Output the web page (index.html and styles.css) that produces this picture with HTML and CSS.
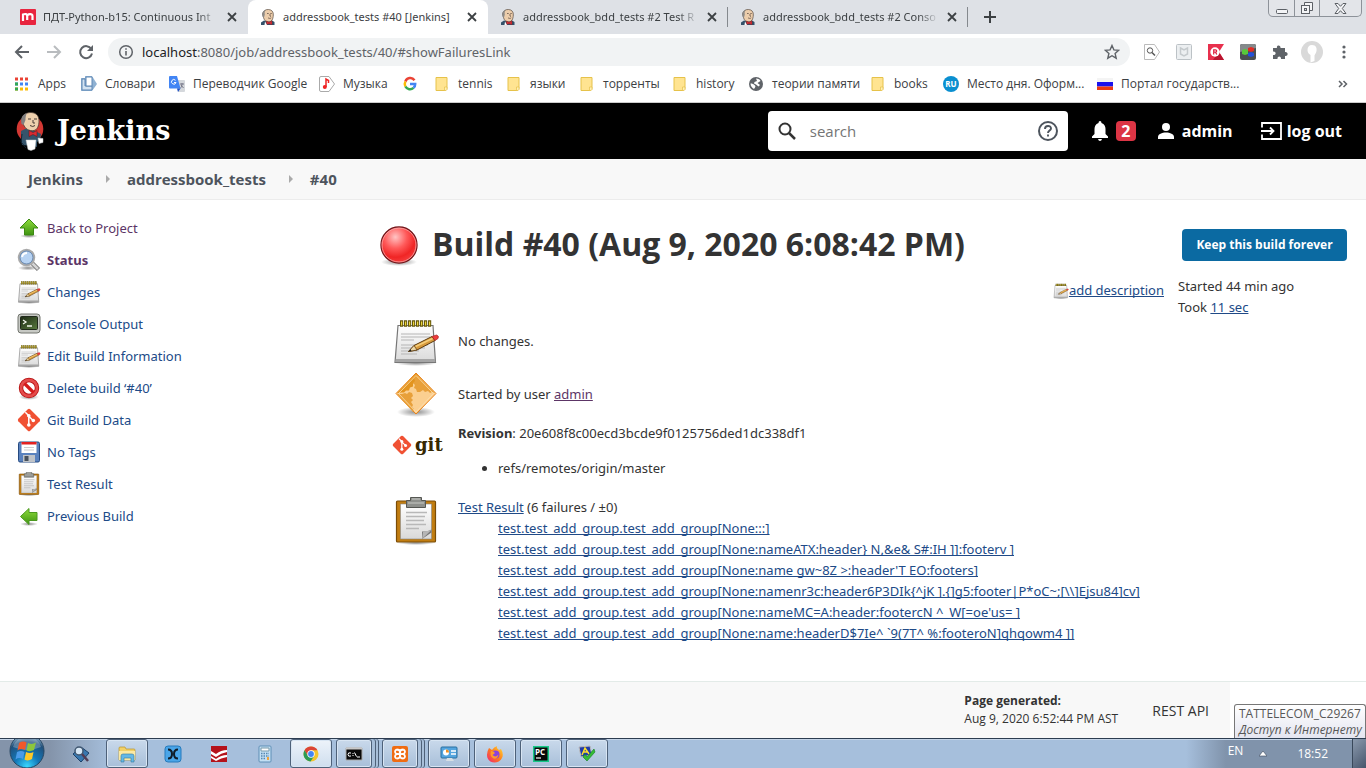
FILE: index.html
```html
<!DOCTYPE html>
<html lang="en">
<head>
<meta charset="utf-8">
<title>addressbook_tests #40 [Jenkins]</title>
<link rel="stylesheet" href="styles.css">
</head>
<body>
<svg class="defs" aria-hidden="true">
  <defs>
    <linearGradient id="gGreen" x1="0" y1="0" x2="0" y2="1"><stop offset="0" stop-color="#8fdc3c"/><stop offset="1" stop-color="#3f9412"/></linearGradient>
    <linearGradient id="gPaper" x1="0" y1="0" x2="0" y2="1"><stop offset="0" stop-color="#ffffff"/><stop offset="1" stop-color="#d9d9d9"/></linearGradient>
    <radialGradient id="gBall" cx=".4" cy=".28" r=".7"><stop offset="0" stop-color="#ffc4c4"/><stop offset=".45" stop-color="#ff5a5a"/><stop offset=".8" stop-color="#f02525"/><stop offset="1" stop-color="#f43a3a"/></radialGradient>
    <radialGradient id="gShadow"><stop offset="0" stop-color="#000" stop-opacity=".45"/><stop offset="1" stop-color="#000" stop-opacity="0"/></radialGradient>
    <linearGradient id="gOrange" x1="0" y1="0" x2="1" y2="1"><stop offset="0" stop-color="#e08a10"/><stop offset="1" stop-color="#f0a53a"/></linearGradient>
    <linearGradient id="gScreen" x1="0" y1="0" x2="1" y2="1"><stop offset="0" stop-color="#1d2a14"/><stop offset="1" stop-color="#587a3e"/></linearGradient>
    <radialGradient id="gOrb" cx=".5" cy=".95" r=".9"><stop offset="0" stop-color="#38d8ff"/><stop offset=".4" stop-color="#1478b8"/><stop offset=".8" stop-color="#20507c"/><stop offset="1" stop-color="#8fb0c8"/></radialGradient>
    <linearGradient id="gFox" x1="1" y1="0" x2="0" y2="1"><stop offset="0" stop-color="#ffe03a"/><stop offset=".5" stop-color="#ff7a1a"/><stop offset="1" stop-color="#f0207a"/></linearGradient>
  </defs>
  <symbol id="butler" viewBox="0 0 16 16">
    <path d="M1 16v-2.500l3-2 4 1 4-1 2.500 1.500V16z" fill="#34526a"/>
    <path d="M2.500 5C3 2 5.500.300 8.500.500c3.500.200 5 2.500 4.800 5.500-.100 4-1.500 6.700-4.300 6.900C6 13 4 11 3.500 8.500z" fill="#eccdab" stroke="#55473d" stroke-width=".7"/>
    <path d="M2.500 7.500C1.800 4 3 1.500 5.500.900c-.800 1.500-1 3-.7 4.600l-.800 3z" fill="#8d8b89"/>
    <path d="M7 4.500h1.700M10.300 4.500h1.500M8 8.800c1.200.8 2.500.8 3.200 0M10 5v2l1 .5" fill="none" stroke="#54443c" stroke-width=".7"/>
    <path d="M6.500 12l2.500 1.200 3-1.500v4l-3-1-2.500 1z" fill="#d22f35" stroke="#711" stroke-width=".3"/>
    <path d="M5 12.500l2 3.500h-2.500z" fill="#fff"/>
  </symbol>
  <symbol id="close" viewBox="0 0 10 10"><path d="M1 1l8 8M9 1l-8 8" stroke="#3c4043" stroke-width="1.800"/></symbol>
  <symbol id="folder" viewBox="0 0 16 16"><path d="M2 1.500h11v11c0 1-1 2-2 2H2z" fill="#ffe491" stroke="#e6c24a"/><path d="M10.500 14.500v-3.500h2.500v2.500q-.5 1-2 1z" fill="#fff0b5" stroke="#e6c24a" stroke-width=".7"/></symbol>
  <symbol id="notepad" viewBox="0 0 48 48">
    <ellipse cx="24" cy="45" rx="21" ry="3" fill="url(#gShadow)"/>
    <path d="M6 7.500h35l2.500 37H3z" fill="url(#gPaper)" stroke="#777" stroke-width="1.200"/>
    <path d="M4 41h39l.5 3H3.500z" fill="#a5a5a5"/>
    <path d="M9 16h29M9 19h29M9 22h13M9 27h27M9 30h24M9 33h18M9 36h16" stroke="#b5b5b5"/>
    <path d="M8 5.500h32" stroke="#63560b" stroke-width="6.500" stroke-dasharray="3.200 .8"/>
    <path d="M9 5.500h30" stroke="#ecd43b" stroke-width="4" stroke-dasharray="1.200 2.800"/>
    <path d="M16.500 33.500L22 27.500l18-9 3 4L25 32z" fill="#d79a3c" stroke="#5b3b10"/>
    <path d="M23.500 28.500l17-8" stroke="#f5ce7a" stroke-width="1.500"/>
    <path d="M16.500 33.500l5.500-6 3 4.500z" fill="#ecd6a4" stroke="#5b3b10" stroke-width=".7"/><path d="M16.500 33.500l2-2.300 1 1.700z" fill="#222"/>
    <path d="M40 18.500l4.500-1.500q3 1 1.500 3.500l-3 2z" fill="#ee3d3d" stroke="#a22" stroke-width=".7"/>
  </symbol>
  <symbol id="gitmark" viewBox="0 0 24 24">
    <path d="M12 .8q.7 0 1.200.5l9.500 9.500q1 1.200 0 2.400l-9.500 9.500q-1.200 1-2.400 0L1.300 13.200q-1-1.200 0-2.400L10.800 1.300Q11.300.8 12 .8z" fill="#f05133"/>
    <path d="M8.300 4.300l3.500 3.500v9.500M11.800 8.300l4.500 4.500" fill="none" stroke="#fff" stroke-width="1.500"/>
    <circle cx="11.800" cy="7.700" r="1.800" fill="#fff"/><circle cx="11.800" cy="17" r="1.800" fill="#fff"/><circle cx="16.300" cy="12.500" r="1.800" fill="#fff"/>
  </symbol>
  <symbol id="clipboard" viewBox="0 0 48 48">
    <ellipse cx="24" cy="46" rx="19" ry="2" fill="url(#gShadow)"/>
    <rect x="4.500" y="4" width="39" height="41" rx="1" fill="#c17d11" stroke="#7b4c06" stroke-width="1.200"/>
    <path d="M8.500 7h31v35h-31z" fill="url(#gPaper)" stroke="#888" stroke-width=".6"/>
    <path d="M14 15.500h21M14 19.500h19M14 23.500h18M14 27.500h20M14 31.500h13" stroke="#b8b8b8" stroke-width="1.500"/>
    <path d="M30 42v-7.500h5l4.500-2v3z" fill="#777"/><path d="M30 42l1-7 8.500-2z" fill="#b5b5b5"/>
    <path d="M14.500 3.500h4V.5h11v3h4v7h-19z" fill="#8e908c" stroke="#555753"/><path d="M20 2h8M16 6h16" stroke="#c8cac6"/>
  </symbol>
</svg>

<header class="browser">
  <div class="tabstrip">
    <div class="tab"><svg class="i16" viewBox="0 0 16 16"><rect width="16" height="16" rx="1" fill="#e8253f"/><path d="M3 12V5.500c2.500-1 4-.5 4.200 1.500V11M7.200 7c.3-2 5.300-3 5.300 0v4" fill="none" stroke="#fff" stroke-width="2.200"/></svg><span class="tab-title fade">ПДТ-Python-b15: Continuous Int</span><button class="close" aria-label="Close tab"><svg><use href="#close"/></svg></button></div>
    <div class="tab active"><svg class="i16"><use href="#butler"/></svg><span class="tab-title">addressbook_tests #40 [Jenkins]</span><button class="close" aria-label="Close tab"><svg><use href="#close"/></svg></button></div>
    <div class="tab split"><svg class="i16"><use href="#butler"/></svg><span class="tab-title fade">addressbook_bdd_tests #2 Test R</span><button class="close" aria-label="Close tab"><svg><use href="#close"/></svg></button></div>
    <div class="tab split"><svg class="i16"><use href="#butler"/></svg><span class="tab-title fade">addressbook_bdd_tests #2 Conso</span><button class="close" aria-label="Close tab"><svg><use href="#close"/></svg></button></div>
    <button class="newtab" aria-label="New tab"><svg class="i12" viewBox="0 0 12 12"><path d="M6 0v12M0 6h12" stroke="#3c4043" stroke-width="2"/></svg></button>
    <div class="window-controls">
      <button aria-label="Minimize"><svg width="14" height="12" viewBox="0 0 14 12"><rect x="1.500" y="7.500" width="11" height="4" rx="1" fill="#f3f4f6" stroke="#5c6066"/></svg></button>
      <button aria-label="Restore"><svg width="14" height="13" viewBox="0 0 14 13"><path d="M4.500 3V.5h8v8H10" fill="#f3f4f6" stroke="#5c6066"/><rect x="1.500" y="3.500" width="8" height="8" fill="#f3f4f6" stroke="#5c6066"/><rect x="4.500" y="6.500" width="2" height="2" fill="#dee1e6" stroke="#5c6066"/></svg></button>
      <button aria-label="Close"><svg width="13" height="11" viewBox="0 0 13 11"><path d="M1 .5h3l2.500 2.800L9 .5h3L8.300 5.500l3.700 5H9L6.500 7.700 4 10.500H1l3.700-5z" fill="#f3f4f6" stroke="#5c6066"/></svg></button>
    </div>
  </div>
  <div class="toolbar">
    <button aria-label="Back"><svg class="i16" viewBox="0 0 16 16"><path d="M15 8H2.500M8 2L2 8l6 6" fill="none" stroke="#5f6368" stroke-width="2"/></svg></button>
    <button aria-label="Forward"><svg class="i16" viewBox="0 0 16 16"><path d="M1 8h12.500M8 2l6 6-6 6" fill="none" stroke="#b9bcbf" stroke-width="2"/></svg></button>
    <button aria-label="Reload"><svg class="i16" viewBox="0 0 16 16"><path d="M13.300 5A6 6 0 1 0 14 9.500" fill="none" stroke="#5f6368" stroke-width="2"/><path d="M15 1v6H9z" fill="#5f6368"/></svg></button>
    <div class="omnibox">
      <svg class="i16" viewBox="0 0 16 16"><circle cx="8" cy="8" r="6.300" fill="none" stroke="#5f6368" stroke-width="1.500"/><path d="M8 7v4.500M8 4.300v1.500" stroke="#5f6368" stroke-width="1.600"/></svg>
      <span class="url"><b>localhost</b>:8080/job/addressbook_tests/40/#showFailuresLink</span>
      <svg class="i16" viewBox="0 0 16 16"><path d="M8 1.500l1.900 4.400 4.800.400-3.600 3.200 1.100 4.700L8 11.700l-4.200 2.500 1.100-4.700L1.300 6.300l4.800-.4z" fill="none" stroke="#5f6368" stroke-width="1.400"/></svg>
    </div>
    <div class="extensions">
      <svg viewBox="0 0 16 16"><path d="M.5.500h10l5 7.500-5 7.500H.5z" fill="#fff" stroke="#bbb"/><circle cx="6" cy="6.500" r="2.700" fill="none" stroke="#555"/><path d="M8 8.500l3 3" stroke="#555" stroke-width="1.500"/></svg>
      <svg viewBox="0 0 16 16"><rect x=".5" y=".5" width="15" height="15" rx="1" fill="#eceff1" stroke="#bcc2c6"/><path d="M4.500 4l3.500 2 3.500-2v6L8 12 4.500 10z" fill="none" stroke="#c5cacd" stroke-width="1.500"/></svg>
      <svg viewBox="0 0 16 16"><path d="M0 0h16l-5 8 5 8H0z" fill="#e8304d"/><path d="M11 8l5 8H5z" fill="#b9142f"/><circle cx="7" cy="8" r="4.700" fill="#fff"/><path d="M5.700 10.500V5.800h1.800c1.600 0 1.600 2.400 0 2.400H5.700M7.500 8.200l1.300 2.300" fill="none" stroke="#e02040" stroke-width="1.200"/></svg>
      <svg viewBox="0 0 16 16"><rect width="16" height="16" rx="2" fill="#4b4f51"/><path d="M0 2q0-2 2-2h12q2 0 2 2v2L0 8z" fill="#85898b"/><path d="M2 6l3-1 3 1v4l-3 1-3-1z" fill="#58c93a"/><path d="M8 4l3-1 3 1v3l-3 1-3-1z" fill="#e02c25"/><path d="M8 9l3-1 3 1v3l-3 1-3-1z" fill="#2450d8"/></svg>
      <svg viewBox="0 0 16 16"><path d="M1 4h4C4 .500 9 .500 8.500 4H13v4c3.500-.5 3.500 4.500 0 4v3H9c.500-3.500-4-3.500-3.500 0H1v-4c3.500.500 3.500-4 0-3.500z" fill="#5f6368"/></svg>
      <svg class="avatar" viewBox="0 0 22 22"><circle cx="11" cy="11" r="11" fill="#d9d9d9"/><path d="M11 4c4 0 5 3 4.500 6-.3 2-1.500 3-2 4.500V20l-4 1.500V14c-2-1-3-3-3-5 0-3 1.500-5 4.500-5z" fill="#fff"/></svg>
      <svg viewBox="0 0 16 16"><g fill="#5f6368"><circle cx="8" cy="3" r="1.600"/><circle cx="8" cy="8" r="1.600"/><circle cx="8" cy="13" r="1.600"/></g></svg>
    </div>
  </div>
  <nav class="bookmarks" aria-label="Bookmarks">
    <a href="#"><svg viewBox="0 0 16 16"><g stroke-width="3" stroke-dasharray="3 2"><path d="M1 3h13" stroke="#ea4335"/><path d="M1 8h13" stroke="#4285f4"/><path d="M1 13h13" stroke="#fbbc05"/></g><path d="M1 6.500h3v3H1zM1 11.500h3v3H1z" fill="#34a853"/></svg>Apps</a>
    <a href="#"><svg viewBox="0 0 16 16"><path d="M4 0h7l5 8-5 7H0V2h4z" fill="#8fb1d2"/><path d="M1 3h3v7h7v4H1z" fill="#d2e2f1" stroke="#5e87b4"/><path d="M5 1h6v9H5z" fill="#fff" stroke="#5e87b4"/></svg>Словари</a>
    <a href="#"><svg viewBox="0 0 16 16"><path d="M8 4h7q1 0 1 1v10q0 1-1 1H9z" fill="#d5d8dc"/><path d="M1 0h7l3.500 12.500H1q-1 0-1-1V1q0-1 1-1z" fill="#4285f4"/><path d="M8 12.500h3.500L9 16z" fill="#1c4fc4"/><path d="M6.500 4.300A2.300 2.300 0 1 0 7 6.500H5" fill="none" stroke="#fff"/><path d="M11 8h4M13 7v1c0 2-1 4-1.500 4M12 9l2.500 3" stroke="#778" fill="none"/></svg>Переводчик Google</a>
    <a href="#"><svg viewBox="0 0 16 16"><path d="M2 .5h8L15.500 8 10 15.500H2Q.5 15.500.5 14V2Q.5.500 2 .5z" fill="#fff" stroke="#aaa"/><path d="M7 11V3l2.500 1.500V7" fill="none" stroke="#e22" stroke-width="1.500"/><circle cx="5.800" cy="11" r="2" fill="#e22"/></svg>Музыка</a>
    <a href="#" aria-label="Google"><svg viewBox="0 0 16 16" fill="none" stroke-width="2.500"><path d="M12.500 4.200A5.200 5.200 0 0 0 3.400 5.500" stroke="#ea4335"/><path d="M3.400 5.500a5.200 5.200 0 0 0 0 5" stroke="#fbbc05"/><path d="M3.400 10.500a5.200 5.200 0 0 0 8.100 1.400" stroke="#34a853"/><path d="M11.500 11.900A5 5 0 0 0 13.200 8H8" stroke="#4285f4"/></svg></a>
    <a href="#"><svg><use href="#folder"/></svg>tennis</a>
    <a href="#"><svg><use href="#folder"/></svg>языки</a>
    <a href="#"><svg><use href="#folder"/></svg>торренты</a>
    <a href="#"><svg><use href="#folder"/></svg>history</a>
    <a href="#"><svg viewBox="0 0 16 16"><circle cx="8" cy="8" r="7" fill="#5f6368"/><path d="M2.500 7.500c2 0 3 .5 4.500 2 1 1 0 2-1 3.500C4 12 2.500 10 2.500 7.500zM8 2.500c2.500 0 4 1 4.500 2.500L9.500 7 12 9l-1.500 1.500L8 8.500 6 7.500 6.500 6 9 5z" fill="#fff"/></svg>теории памяти</a>
    <a href="#"><svg><use href="#folder"/></svg>books</a>
    <a href="#"><svg viewBox="0 0 16 16"><circle cx="8" cy="8" r="8" fill="#0a8fd0"/><text class="ru" x="8" y="11" text-anchor="middle">RU</text></svg>Место дня. Оформ...</a>
    <a href="#"><svg viewBox="0 0 16 16"><path d="M0 2h16v4H0z" fill="#f4f4f4"/><path d="M0 6h16v4.500H0z" fill="#1a12ee"/><path d="M0 10.500h16V14H0z" fill="#ed3b12"/></svg>Портал государств...</a>
    <button class="more" aria-label="More bookmarks"><svg viewBox="0 0 16 16"><path d="M4 5l3 3-3 3M8.500 5l3 3-3 3" fill="none" stroke="#5f6368" stroke-width="1.500"/></svg></button>
  </nav>
</header>

<header class="jenkins-header">
  <a class="logo" href="#">
    <svg viewBox="0 0 28 40"><circle cx="14" cy="18" r="13.300" fill="#d33833"/><path d="M5 20l6-3 8 3 6 3-1 6-3 2v5l-3-1-12-1-1-10z" fill="#35546b"/><path d="M6 23l-1 8 5 6" fill="none" stroke="#132431"/><path d="M5.500 9C6 4 10 1.500 15 1.500c6 .3 8 4 8 8.500 0 5-2 9-5 9.500-5 1-9-2-10.500-6z" fill="#eed0ad" stroke="#4c3d35" stroke-width=".8"/><path d="M5.500 13C4.500 7 6.500 3.500 11 2c-1.500 3-1.500 5-1.500 7l-2 5z" fill="#817f80"/><path d="M12 8h3M18 8h3M14 14.500q3 2 5 0M17 9v3h2" fill="none" stroke="#493c36"/><path d="M13 19.500l4 2 4-2v6l-4-2-4 2z" fill="#d92b32" stroke="#661015" stroke-width=".5"/><path d="M10 29h10l-1 9-4 1.500-3-1zM22 27l5 .5v4l-4 1z" fill="#fff" stroke="#c5c8ca" stroke-width=".5"/></svg>
    <span>Jenkins</span>
  </a>
  <label class="search">
    <svg class="i18" viewBox="0 0 18 18"><circle cx="7" cy="7" r="5.500" fill="none" stroke="#333" stroke-width="2"/><path d="M11 11l6 6" stroke="#333" stroke-width="2.500"/></svg>
    <input type="search" placeholder="search" aria-label="search">
    <svg class="i20" viewBox="0 0 20 20"><circle cx="10" cy="10" r="9" fill="none" stroke="#4d545d" stroke-width="2"/><path d="M7 8c0-4 6-4 6-.5 0 2-3 2.200-3 4.500M10 13.500v2" fill="none" stroke="#4d545d" stroke-width="1.900"/></svg>
  </label>
  <a class="alerts" href="#" aria-label="2 notifications"><svg width="16" height="20" viewBox="0 0 16 20"><path d="M8 0q1.500 0 1.500 2C12.500 3 13.500 5.500 13.500 8v5l2.500 2.500V17H0v-1.500L2.500 13V8c0-2.500 1-5 4-6Q6.500 0 8 0zM6 18h4q-.5 2-2 2t-2-2z" fill="#fff"/></svg><span>2</span></a>
  <a class="user" href="#"><svg width="18" height="18" viewBox="0 0 18 18"><circle cx="9" cy="5" r="4" fill="#fff"/><path d="M1 17v-2c0-6 16-6 16 0v2z" fill="#fff"/></svg>admin</a>
  <a class="logout" href="#"><svg width="22" height="18" viewBox="0 0 22 18"><path d="M2 5.500V1h19v16H2v-4.500M1 9h12M10 5.500L13.500 9 10 12.500" fill="none" stroke="#fff" stroke-width="1.800"/></svg>log out</a>
</header>

<nav class="breadcrumbs" aria-label="Breadcrumbs">
  <a href="#">Jenkins</a><i></i><a href="#">addressbook_tests</a><i></i><a href="#">#40</a>
</nav>

<div class="page">
  <nav class="side">
    <a class="visited" href="#"><svg viewBox="0 0 24 24"><ellipse cx="12" cy="20" rx="9" ry="2" fill="url(#gShadow)"/><path d="M12 3l9 9h-4.500v7h-9v-7H3z" fill="url(#gGreen)" stroke="#3c8a13"/></svg>Back to Project</a>
    <a class="visited current" href="#"><svg viewBox="0 0 24 24"><ellipse cx="11" cy="20" rx="10" ry="2.500" fill="url(#gShadow)"/><path d="M14 14l7.500 7.500" stroke="#777" stroke-width="4.500"/><path d="M14 14l7 7" stroke="#d5d5d5" stroke-width="2.500"/><circle cx="9.500" cy="9.500" r="7.500" fill="#b7d3f3" stroke="#aaa" stroke-width="2.500"/><circle cx="9.500" cy="9.500" r="6.500" fill="none" stroke="#6c8eb8"/><path d="M5 9q1-4 5-4" stroke="#fff" stroke-width="2" fill="none"/></svg>Status</a>
    <a href="#"><svg><use href="#notepad"/></svg>Changes</a>
    <a href="#"><svg viewBox="0 0 24 24"><rect x="1" y="2" width="22" height="19" rx="3" fill="#c7c9c4" stroke="#72756e"/><rect x="3.500" y="4.500" width="17" height="13" rx="1" fill="url(#gScreen)" stroke="#20291b"/><path d="M6 8l3 2-3 2M10 14h5" stroke="#f2f5ed" stroke-width="1.300" fill="none"/></svg>Console Output</a>
    <a href="#"><svg><use href="#notepad"/></svg>Edit Build Information</a>
    <a href="#"><svg viewBox="0 0 24 24"><ellipse cx="12" cy="21" rx="10" ry="3" fill="url(#gShadow)"/><circle cx="12" cy="12" r="8" fill="#fff" stroke="#b30b0b" stroke-width="4.400"/><path d="M6 6l12 12" stroke="#d51a1a" stroke-width="3.200"/><circle cx="12" cy="12" r="8" fill="none" stroke="#e44b4b" stroke-width="2.800"/></svg>Delete build ‘#40’</a>
    <a href="#"><svg><use href="#gitmark"/></svg>Git Build Data</a>
    <a href="#"><svg viewBox="0 0 24 24"><rect x="1.500" y="2" width="21" height="20" rx="1.500" fill="#5a82be" stroke="#264a80"/><path d="M4.500 2.500h15V13h-15z" fill="#fff"/><path d="M4.500 2h15v2.500h-15z" fill="#e32121"/><path d="M7 7.500h10M7 10h10" stroke="#ccc"/><path d="M6 15h12v7H6z" fill="#bfc3c8"/><path d="M7.500 16h4v5h-4z" fill="#47505b"/></svg>No Tags</a>
    <a href="#"><svg><use href="#clipboard"/></svg>Test Result</a>
    <a href="#"><svg viewBox="0 0 24 24"><ellipse cx="12" cy="20" rx="9" ry="2" fill="url(#gShadow)"/><path d="M3.500 12.500L12 4.500v4h8v8h-8v4z" fill="url(#gGreen)" stroke="#4c9920"/></svg>Previous Build</a>
  </nav>

  <main class="build">
    <section class="details">
      <h1><svg width="40" height="48" viewBox="0 0 40 48"><ellipse cx="20" cy="42" rx="18" ry="4" fill="url(#gShadow)"/><circle cx="20" cy="25" r="18" fill="url(#gBall)" stroke="#74161a" stroke-width="1.300"/><circle cx="20" cy="25" r="17" fill="none" stroke="#ffb8b8" stroke-opacity=".7"/></svg>Build #40 (Aug 9, 2020 6:08:42 PM)</h1>
      <p class="describe"><a href="#"><svg class="i16"><use href="#notepad"/></svg><u>add description</u></a></p>
      <div class="row mid">
        <svg class="i48"><use href="#notepad"/></svg>
        <p>No changes.</p>
      </div>
      <div class="row mid">
        <svg class="i48" viewBox="0 0 48 48"><ellipse cx="24" cy="41" rx="19" ry="5" fill="url(#gShadow)"/><path d="M24 2l20 20.500L24 43 4 22.500z" fill="#fbcf90" stroke="#e8821a"/><path d="M24 2.500l2 2-1 3-2 1 1 3-3 1v3l-3 1-1 3-3 0-2 2-3 0-4.500 1z" fill="#e3941f"/><path d="M26 4.500l17 17.500-3-1-2 1-2-2-3 1-2-2-3 2-3 0-1-3-2-1 1-3-2-2 2-2-1-3z" fill="#e8a03a"/><path d="M5 23l5 0 3-1 2 1 2-2 3 1 1 3-2 2 2 2-2 2 2 3-1 2 2 2-1 3z" fill="#e8a03a"/><path d="M24 4.500l17.500 18L24 41 6.500 22.500z" fill="none" stroke="#ffe1b0" stroke-opacity=".8"/></svg>
        <p>Started by user <a class="visited" href="#">admin</a></p>
      </div>
      <div class="row git">
        <span class="gitlogo"><svg class="i20"><use href="#gitmark"/></svg><b>git</b></span>
        <div><p><b>Revision</b>: 20e608f8c00ecd3bcde9f0125756ded1dc338df1</p>
          <ul><li>refs/remotes/origin/master</li></ul></div>
      </div>
      <div class="row tests">
        <svg class="i48"><use href="#clipboard"/></svg>
        <div><p><a href="#">Test Result</a> (6 failures / ±0)</p>
          <ul class="failures">
            <li><a href="#">test.test_add_group.test_add_group[None:::]</a></li>
            <li><a href="#">test.test_add_group.test_add_group[None:nameATX:header} N,&amp;e&amp; S#:IH ]]:footerv ]</a></li>
            <li><a href="#">test.test_add_group.test_add_group[None:name gw~8Z &gt;:header'T EO:footers]</a></li>
            <li><a href="#">test.test_add_group.test_add_group[None:namenr3c:header6P3DIk{^jK ].{]g5:footer|P*oC~;[\\]Ejsu84]cv]</a></li>
            <li><a href="#">test.test_add_group.test_add_group[None:nameMC=A:header:footercN ^_W[=oe'us= ]</a></li>
            <li><a href="#">test.test_add_group.test_add_group[None:name:headerD$7Ie^ `9(7T^ %:footeroN]qhqowm4 ]]</a></li>
          </ul></div>
      </div>
    </section>
    <aside class="timing">
      <button class="keep">Keep this build forever</button>
      <p>Started 44 min ago</p>
      <p>Took <a href="#">11 sec</a></p>
    </aside>
  </main>
</div>

<footer class="footer">
  <p class="generated"><b>Page generated:</b><span>Aug 9, 2020 6:52:44 PM AST</span></p>
  <a href="#">REST API</a>
  <div class="network-tip" role="tooltip">TATTELECOM_C29267<em>Доступ к Интернету</em></div>
</footer>

<nav class="taskbar" aria-label="Taskbar">
  <button class="start" aria-label="Start"><svg width="36" height="36" viewBox="0 0 36 36"><circle cx="18" cy="18" r="17" fill="url(#gOrb)" stroke="#274763"/><path d="M4 14a14.500 14.500 0 0 1 28 0q-14 6-28 0z" fill="#fff" opacity=".25"/><path d="M10 10q4-2.500 7.500-.5L16 17q-4-2-7.500.5z" fill="#f0592a"/><path d="M19 10q4 2 8-.5l-2 7.500q-4 2-7.500.5z" fill="#8cc63c"/><path d="M8 19q4-2 7.500 0L14 26q-4-2-7.500.5z" fill="#4a9be8"/><path d="M17 19q4 2 7.500 0L23 26q-4 2.500-7.500.5z" fill="#ffc928"/></svg></button>
  <div class="apps">
    <button aria-label="Search tool"><svg viewBox="0 0 18 18"><path d="M1 9l8-7 8 6-8 9z" fill="#3978b0" stroke="#1d4068"/><circle cx="7" cy="6" r="4" fill="#d7e7f5" stroke="#405770" stroke-width="1.500"/><path d="M10 9l6 7" stroke="#533d55" stroke-width="2.500"/></svg></button>
    <button class="open" aria-label="Explorer"><svg viewBox="0 0 18 18"><path d="M1 3q0-1 1-1h5l1 2h8q1 0 1 1v10H1z" fill="#f2d168" stroke="#b7932c" stroke-width=".7"/><path d="M1 6h16v9H1z" fill="#fbe9a3"/><path d="M3 17v-6q0-2 2-2h9q2 0 2 2v6h-3v-4H6v4z" fill="#65b8e6" stroke="#34789f" stroke-width=".6"/></svg></button>
    <button aria-label="Media"><svg viewBox="0 0 18 18"><rect x="1" y="1" width="16" height="16" rx="3" fill="#4aa5e8" stroke="#267bbd"/><path d="M4 4.500q4 0 4 4.500t-4 4.500M14 4.500q-4 0-4 4.500t4 4.500" fill="none" stroke="#101c28" stroke-width="2"/></svg></button>
    <button aria-label="Red app"><svg viewBox="0 0 18 18"><path d="M1 1h16v16H1z" fill="#b5121b"/><path d="M1 6l5 3q5-4 11-4v2q-6 1-11 5l-5-3z" fill="#fff"/><path d="M1 11l5 3q5-4 11-4v2q-6 1-11 4l-5-3z" fill="#fff"/></svg></button>
    <button aria-label="Calculator"><svg viewBox="0 0 18 18"><rect x="3" y="1" width="12" height="16" rx="1" fill="#c3dff3" stroke="#5f8fb6"/><path d="M5 3h8v3H5z" fill="#fff" stroke="#79a"/><path d="M5 8.500h8M5 11h8M5 13.500h5" stroke="#5689b2" stroke-width="1.500" stroke-dasharray="1.500 1"/><path d="M11 12h2v3h-2z" fill="#f0a43a"/></svg></button>
    <button class="open lit" aria-label="Chrome"><svg viewBox="0 0 18 18"><circle cx="9" cy="9" r="7.500" fill="#f3c52e"/><path d="M2.500 5.250A7.500 7.500 0 0 1 15.500 5.250H9L6 11z" fill="#db4437"/><path d="M2.500 5.250A7.500 7.500 0 0 0 8.500 16.500L12.200 11H6z" fill="#2c9b55"/><circle cx="9" cy="9" r="3.700" fill="#fff"/><circle cx="9" cy="9" r="2.900" fill="#4285f4"/></svg></button>
    <button class="open stack" aria-label="Command prompt"><svg viewBox="0 0 18 18"><path d="M1 3h16v12H1z" fill="#090909" stroke="#aaa"/><path d="M1 2.500h16v2H1z" fill="#c8c8c8"/><path d="M6 8q-3-1-3 1.500T6 11M8 8v1M8 10v1M9.500 7.500l2 4M12 12h3" fill="none" stroke="#fff"/></svg></button>
    <button class="open stack" aria-label="XAMPP"><svg viewBox="0 0 18 18"><rect x="1" y="1" width="16" height="16" rx="2" fill="#ef6c12"/><path d="M5.500 4.500Q9 4.500 9 7t3.500 2M12.500 4.500Q9 4.500 9 7t-3.500 2M5.500 13.500Q9 13.500 9 11t3.500-2M12.500 13.500Q9 13.500 9 11T5.500 9M5.500 4.500q-3 2 0 4.500-3 2.500 0 4.500M12.500 4.500q3 2 0 4.500 3 2.500 0 4.500" fill="none" stroke="#fff" stroke-width="1.800"/></svg></button>
    <button class="open" aria-label="Remote"><svg viewBox="0 0 18 18"><rect x="1" y="2" width="16" height="11" rx="1" fill="#54a5df" stroke="#286e9f"/><circle cx="6" cy="7.500" r="3" fill="#fff"/><path d="M6 4.500v3h3a3 3 0 0 0-3-3z" fill="#f09022"/><path d="M11 6h5M11 9h5" stroke="#fff" stroke-width="1.500"/><path d="M7 13h5l2 3H6z" fill="#d7dfe4"/></svg></button>
    <button class="open" aria-label="Firefox"><svg viewBox="0 0 18 18"><path d="M3 3l3 2q2-3 5-4-1 2 2 4l2-1q3 5 1 9c-3 6-12 6-14.500 0Q0 8 3 3z" fill="url(#gFox)"/><circle cx="9.500" cy="9.500" r="4" fill="#8b42dc"/><path d="M5 6q3 0 4 2L6.500 10q3 3 6-.5-1 5-5 4-4-2-2.500-7.500z" fill="#ff9c28"/></svg></button>
    <button class="open" aria-label="PyCharm"><svg viewBox="0 0 18 18"><path d="M1 1h16v16H1z" fill="#17c888"/><path d="M2.500 2.500h13v13h-13z" fill="#090909"/><text class="pc" x="3" y="10">PC</text><path d="M4 13h5" stroke="#fff" stroke-width="1.200"/></svg></button>
    <button class="open" aria-label="Network check"><svg viewBox="0 0 18 18"><path d="M1 2l11-1 2 9-11 2z" fill="#203caa" stroke="#bbb"/><path d="M4 10l3-7 4 6M5 7h5" fill="none" stroke="#ffe02a" stroke-width="1.500"/><path d="M5 12l4 4 8-9-1-3-7 8-2-3z" fill="#35bd35" stroke="#147b20" stroke-width=".6"/></svg></button>
  </div>
  <div class="tray">
    <span class="lang">EN</span>
    <svg width="8" height="6" viewBox="0 0 8 6"><path d="M0 5l4-5 4 5z" fill="#fff" stroke="#39485a" stroke-width=".6"/></svg>
    <time>18:52</time>
    <button class="desktop" aria-label="Show desktop"></button>
  </div>
</nav>
</body>
</html>
```
FILE: styles.css
```css
* { box-sizing: border-box; }
body { margin: 0; min-height: 100vh; display: flex; flex-direction: column; background: #fff; color: #333; font: 13px/21px "Noto Sans", "Open Sans", sans-serif; }
p, ul, h1 { margin: 0; padding: 0; }
button { margin: 0; padding: 0; border: 0; background: none; font: inherit; color: inherit; display: flex; align-items: center; justify-content: center; }
svg { flex: none; display: block; }
a { color: #204a87; text-decoration-skip-ink: none; }
a.visited { color: #5c3566; }
.defs { width: 0; height: 0; position: absolute; }
.i12 { width: 12px; height: 12px; }
.i16 { width: 16px; height: 16px; }
.i18 { width: 18px; height: 18px; }
.i20 { width: 20px; height: 20px; }
.i48 { width: 48px; height: 48px; }

/* Browser frame */
.browser { font: 12px/16px "Open Sans", "Noto Sans", sans-serif; color: #3c4043; }
.tabstrip { display: flex; height: 34px; padding-left: 8px; background: #dee1e6; }
.tab { flex: 0 1 240px; min-width: 0; display: flex; align-items: center; gap: 7px; padding: 0 10px 0 12px; font-family: "Noto Sans", "Open Sans", sans-serif; font-size: 11px; }
.tab.active { background: #fff; border-radius: 8px 8px 0 0; }
.tab.split { background: linear-gradient(#85898e, #85898e) right center / 1px 20px no-repeat; }
.tab-title { flex: 1; min-width: 0; overflow: hidden; white-space: nowrap; }
.fade { mask-image: linear-gradient(to right, #000 88%, transparent); }
.close { width: 12px; height: 16px; }
.close svg { width: 10px; height: 10px; }
.newtab { width: 44px; }
.window-controls { display: flex; height: 17px; margin: 0 4px 0 auto; border: 1px solid #8d9299; border-top: 0; border-radius: 0 0 5px 5px; background: #e3e5e9; }
.window-controls button { width: 25px; }
.window-controls button + button { border-left: 1px solid #8d9299; }
.window-controls button:last-child { width: 42px; }
.toolbar { display: flex; align-items: center; height: 36px; padding: 0 14px; gap: 16px; }
.omnibox { flex: 1; display: flex; align-items: center; height: 28px; margin-left: -2px; padding: 0 10px; gap: 8px; border-radius: 14px; background: #f1f3f4; font-family: "Noto Sans", "Open Sans", sans-serif; font-size: 13px; color: #5f6368; }
.omnibox .url { flex: 1; }
.omnibox b { font-weight: 400; color: #202124; }
.extensions { display: flex; align-items: center; gap: 16px; margin-left: -2px; }
.extensions svg { width: 16px; height: 16px; }
.extensions .avatar { width: 22px; height: 22px; margin: 0 -3px; }
.bookmarks { display: grid; grid-template-columns: 67px 88px 150px 83px 32px 72px 73px 93px 76px 122px 73px 154px 1fr 16px; align-items: center; height: 33px; padding: 0 15px 4px 14px; border-bottom: 1px solid #ccc; }
.bookmarks a { display: flex; align-items: center; gap: 8px; color: inherit; text-decoration: none; white-space: nowrap; }
.bookmarks svg { width: 16px; height: 16px; }
.ru { font: bold 8px "Open Sans", sans-serif; fill: #fff; }
.pc { font: bold 8px "Open Sans", sans-serif; fill: #fff; }

/* Jenkins header */
.jenkins-header { display: flex; align-items: center; height: 56px; padding: 0 24px 0 16px; background: #000; color: #fff; font-family: "Open Sans", "Noto Sans", sans-serif; font-size: 16px; font-weight: 700; }
.jenkins-header a { display: flex; align-items: center; color: #fff; text-decoration: none; }
.jenkins-header .logo { gap: 13px; font: bold 27px/32px "DejaVu Serif", serif; }
.logo svg { width: 28px; height: 40px; }
.search { display: flex; align-items: center; gap: 14px; width: 300px; height: 40px; margin-left: auto; padding: 0 10px; border-radius: 4px; background: #fff; }
.search input { flex: 1; min-width: 0; padding: 0; border: 0; outline: 0; background: none; font: 15px/24px "Open Sans", sans-serif; }
.search input::placeholder { color: #757575; }
.alerts { gap: 8px; margin-left: 24px; }
.alerts span { width: 20px; border-radius: 4px; line-height: 20px; text-align: center; background: #dc3545; }
.user { gap: 7px; margin-left: 21px; }
.logout { gap: 5px; margin-left: 27px; }
.breadcrumbs { display: flex; align-items: center; height: 41px; padding: 0 28px; border-bottom: 1px solid #ececec; background: #f8f8f8; font-family: "Open Sans", "Noto Sans", sans-serif; font-size: 15px; font-weight: 700; }
.breadcrumbs a { color: #4d545d; text-decoration: none; }
.breadcrumbs i { margin: 0 17px 0 23px; border: 4px solid transparent; border-left-color: #aaa; border-right: 0; }

/* Page */
.page { flex: 1; display: grid; grid-template-columns: 340px minmax(0, 1fr); }
.side { display: flex; flex-direction: column; padding: 12px 0 0 17px; }
.side a { display: flex; align-items: center; gap: 6px; height: 32px; text-decoration: none; }
.side svg { width: 24px; height: 24px; }
.current { font-weight: 700; }
.build { display: flex; gap: 14px; padding: 20px 19px 0 39px; }
.details { flex: 1; min-width: 0; }
h1 { display: flex; align-items: center; gap: 13px; height: 48px; font: bold 32px/44px "Open Sans", "Noto Sans", sans-serif; white-space: nowrap; }
.describe { display: flex; justify-content: flex-end; margin: 12px 0 14px; }
.describe a { display: flex; align-items: center; text-decoration: none; }
.describe u { text-decoration-skip-ink: none; }
.row { display: grid; grid-template-columns: 48px 1fr; column-gap: 18px; padding-left: 13px; }
.row.mid { align-items: center; height: 53px; }
.row.git { padding-top: 2px; }
.gitlogo { display: flex; align-items: center; gap: 3px; height: 44px; font: bold 18px/24px "DejaVu Serif", serif; color: #362701; }
.row ul { margin: 14px 0 18px 40px; }
.row .failures { margin: 0 0 0 40px; list-style: none; white-space: nowrap; }
.timing { width: 169px; padding-top: 9px; }
.keep { width: 165px; height: 32px; margin: 0 0 15px 4px; border-radius: 4px; background: #0b6aa2; color: #fff; font: bold 12px/16px "Open Sans", "Noto Sans", sans-serif; }

.footer { position: relative; display: flex; align-items: center; height: 57px; padding: 0 157px 0 0; border-top: 1px solid #e3ebe8; background: linear-gradient(#fff, #fff) right / 136px 100% no-repeat #f8f8f8; font-family: "Open Sans", "Noto Sans", sans-serif; font-size: 14px; }
.generated { display: flex; flex-direction: column; width: 188px; margin-left: auto; font-size: 12px; line-height: 18px; white-space: nowrap; }
.footer a { color: #333; text-decoration: none; }
.network-tip { position: absolute; right: 0; bottom: 0; width: 132px; height: 34px; padding: 1px 4px; border: 1px solid #777; border-bottom: 0; border-radius: 3px 3px 0 0; background: linear-gradient(#fff, #e4e5f0); color: #575757; font-size: 12px; line-height: 16px; white-space: nowrap; }
.network-tip em { display: block; }

/* Desktop taskbar */
.taskbar { display: flex; height: 30px; overflow: hidden; border-top: 1px solid #2c3c50; background: linear-gradient(to right, #8494aa 50px, #a6bfdc 110px, #a6bfdc calc(100% - 180px), #8093ab calc(100% - 140px)); box-shadow: inset 0 1px #c5d5e8; }
.start { width: 58px; padding-right: 4px; align-items: flex-start; }
.start svg { margin-top: -6px; }
.apps { flex: 1; display: flex; }
.apps button { width: 42px; margin: 0 2px; border: 1px solid transparent; }
.apps svg { width: 18px; height: 18px; }
.apps .open { border-color: #4e6179; border-radius: 3px; background: linear-gradient(#c9d9eb, #a8bfd9); box-shadow: inset 0 0 0 1px #d8e5f3; }
.apps .lit { background: linear-gradient(#edf3fa, #cfdeee); }
.apps .stack { width: 36px; margin-right: 8px; box-shadow: inset 0 0 0 1px #d8e5f3, 3px 0 #a8bfd9, 4px 0 #4e6179, 6px 0 #a8bfd9, 7px 0 #4e6179; }
.tray { display: flex; align-items: center; color: #fff; font-family: "Open Sans", "Noto Sans", sans-serif; font-size: 12px; line-height: 16px; }
.lang { padding-bottom: 5px; margin-right: 16px; }
.tray time { margin: 0 24px 0 30px; }
.desktop { width: 14px; height: 30px; border-left: 1px solid #39485a; background: linear-gradient(135deg, #8b9aae, #45546a); }
```
